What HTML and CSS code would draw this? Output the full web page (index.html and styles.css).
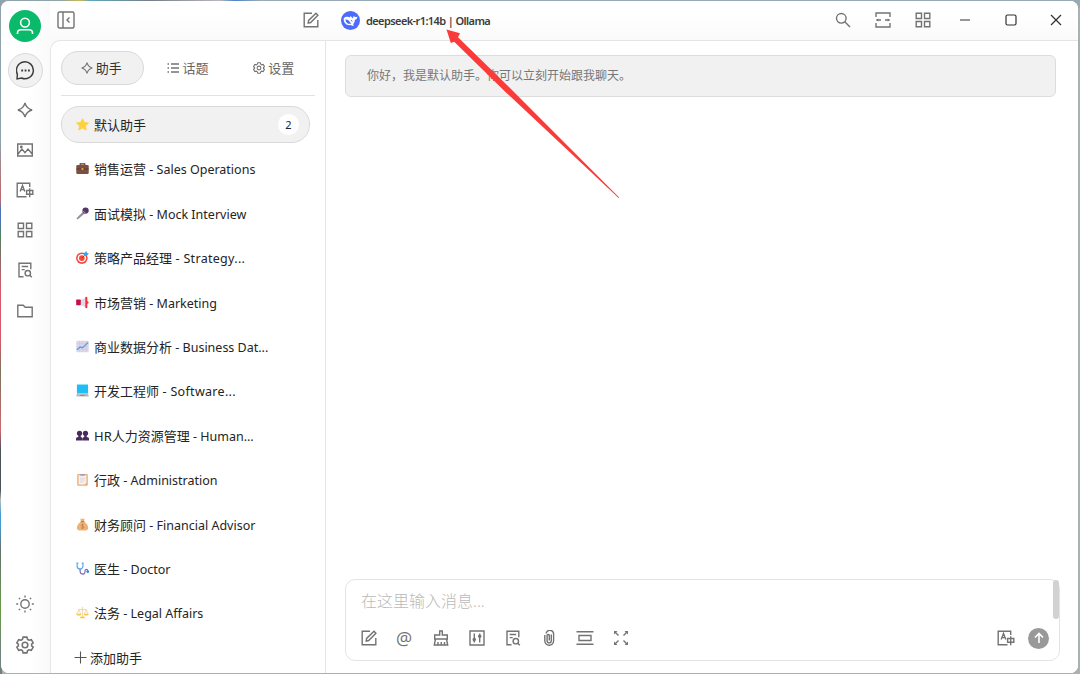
FILE: index.html
```html
<!DOCTYPE html>
<html lang="zh-CN">
<head>
    <meta charset="UTF-8">
    <meta name="viewport" content="width=device-width, initial-scale=1.0">
    <title>默认助手</title>
    <link rel="stylesheet" href="styles.css">
</head>
<body>
    <svg class="sprites">
        <symbol id="i-edit" viewBox="0 0 16 16"><path d="M9 1.2H1.2v13.6h13.6V8"/><path d="M5.2 11l.4-2.6L13 1.3l1.9 1.9-7.2 7.3z"/></symbol>
        <symbol id="i-grid" viewBox="0 0 16 16"><path d="M1.2 1.2h5.3v5.3H1.2zM9.5 1.2h5.3v5.3H9.5zM1.2 9.5h5.3v5.3H1.2zM9.5 9.5h5.3v5.3H9.5z"/></symbol>
        <symbol id="i-sparkle" viewBox="0 0 16 16"><path d="M8 .9C8.900 4.500 11.500 7.100 15.100 8 11.500 8.900 8.900 11.500 8 15.100 7.100 11.500 4.500 8.900.900 8 4.500 7.100 7.100 4.500 8 .9z"/></symbol>
        <symbol id="i-translate" viewBox="0 0 18 16"><path d="M13.7 5V1.2H1.2v13.6h9.3M4.2 9.5l2.3-6 2.3 6M5 7.6h3M10.6 8.5h6.2v3.8h-6.2zM13.7 6.3v9"/></symbol>
        <symbol id="i-doc" viewBox="0 0 16 16"><path d="M6.5 14.8H2V1.2h11.8v6M4.7 4.5h6.4M4.7 7.6h3"/><circle cx="10.8" cy="11.2" r="2.7"/><path d="M12.8 13.2l2 2"/></symbol>
        <symbol id="i-gear" viewBox="0 0 16 16"><path d="M6.3 1h3.4l.6 2 1.3.8 2-.5 1.7 2.9-1.4 1.100v1.400l1.400 1.100-1.700 2.900-2-.5-1.300.8-.6 2H6.300l-.6-2-1.300-.8-2 .5L.700 9.800l1.400-1.100V7.300L.700 6.200l1.700-2.900 2 .5 1.300-.8z"/><circle cx="8" cy="8" r="2.500"/></symbol>
    </svg>

    <div class="window">
        <nav class="sidebar">
            <div class="avatar">
                <svg viewBox="0 0 18 18" class="icon"><circle cx="9" cy="5.600" r="4.400"/><path d="M1.500 17v-1c0-2.200 1.600-3.200 3.500-3.200h8c1.900 0 3.500 1 3.500 3.200v1"/></svg>
            </div>
            <div class="menu">
                <div class="menu-item active">
                    <svg viewBox="0 0 18 18" class="icon"><path d="M1 17l.3-4.600A8 8 0 1 1 5.200 16.100z"/><path d="M5 9h1.700M8.200 9h1.700M11.400 9h1.700" class="bold"/></svg>
                </div>
                <div class="menu-item"><svg class="icon"><use href="#i-sparkle"/></svg></div>
                <div class="menu-item">
                    <svg viewBox="0 0 16 16" class="icon"><path d="M.7 2h14.600v12H.7zM1 12l4-5 3 3.600L11 7l4.200 5"/><circle cx="4.300" cy="5" r=".7"/></svg>
                </div>
                <div class="menu-item"><svg class="icon wide"><use href="#i-translate"/></svg></div>
                <div class="menu-item"><svg class="icon"><use href="#i-grid"/></svg></div>
                <div class="menu-item"><svg class="icon"><use href="#i-doc"/></svg></div>
                <div class="menu-item">
                    <svg viewBox="0 0 16 16" class="icon"><path d="M.8 2.300h5.400l2 2h7v9.500H.8z"/></svg>
                </div>
            </div>
            <div class="menu menu-bottom">
                <div class="menu-item">
                    <svg viewBox="0 0 18 18" class="icon sun"><circle cx="9" cy="9" r="4.200"/><path d="M9 .4v2M9 15.600v2M.2 9h2M15.800 9h2M2.900 2.900l1.200 1.200M13.900 13.900l1.200 1.200M2.900 15.100l1.200-1.200M13.900 4.100l1.200-1.200"/></svg>
                </div>
                <div class="menu-item"><svg class="icon sun"><use href="#i-gear"/></svg></div>
            </div>
        </nav>

        <div class="main">
            <header class="navbar">
                <div class="navbar-left">
                    <svg viewBox="0 0 18 18" class="icon wide"><rect x="1" y="1" width="16" height="16" rx="1.500"/><path d="M6 1v16M12.500 6.500L10 9l2.500 2.500"/></svg>
                    <svg class="icon"><use href="#i-edit"/></svg>
                </div>
                <div class="navbar-right">
                    <svg viewBox="0 0 18 18" class="logo"><circle cx="9" cy="9" r="9" fill="#4d6bfe"/><path d="M2.600 6.800c1.700-1.600 4.300-1.700 6-.6-.1-.7.200-1.200.7-1.400.4 1 1.300 1.600 2 2.200.3-1 .2-1.800.8-2.600.4.900 1 1.300 1.700 1.300.7 0 1.200-.2 1.700-.6 0 1.800-.8 3-2.300 3.300-.1 2-.8 3.300-1.900 4.200l1.300.9c-1.200.6-2.500.4-3.400-.2-3.700.7-7.200-2-6.600-6.500z" fill="#fff"/><path d="M4.200 8.200c2-.3 3.400 1 4.200 2.300.5.700 1 1.100 1.500 1.300-2.700 1.200-5.400-.6-5.700-3.600zM9.300 8.500c.9 0 1.500.5 1.700 1.400-.9.100-1.600-.5-1.700-1.400z" fill="#4d6bfe"/></svg>
                    <span class="model">deepseek-r1:14b | Ollama</span>
                    <div class="tools">
                        <svg viewBox="0 0 16 16" class="icon"><circle cx="6.300" cy="6.300" r="4.800"/><path d="M9.800 9.800l5.200 5.200"/></svg>
                        <svg viewBox="0 0 16 16" class="icon"><path d="M1 5V1h14v4M1 11v4h14v-4M1.500 8H6M10 8h4.500"/><path d="M1 8l2.300-1.500v3zM15 8l-2.300-1.500v3z" class="fill"/></svg>
                        <svg class="icon"><use href="#i-grid"/></svg>
                    </div>
                    <div class="controls">
                        <svg viewBox="0 0 12 12"><path d="M1 6h10"/></svg>
                        <svg viewBox="0 0 12 12"><rect x="1" y="1" width="10" height="10" rx="1.500"/></svg>
                        <svg viewBox="0 0 12 12"><path d="M1 1l10 10M11 1L1 11"/></svg>
                    </div>
                </div>
            </header>

            <div class="content">
                <section class="assistants">
                    <div class="tabs">
                        <div class="tab active"><svg class="icon"><use href="#i-sparkle"/></svg>助手</div>
                        <div class="tab"><svg viewBox="0 0 12 12" class="icon"><path d="M4 2h8M4 6h8M4 10h8M.5 2H2M.5 6H2M.5 10H2"/></svg>话题</div>
                        <div class="tab"><svg class="icon"><use href="#i-gear"/></svg>设置</div>
                    </div>
                    <div class="list">
                        <div class="item active">
                            <svg viewBox="0 0 14 14"><path d="M7 .8l2 4 4.400.6-3.200 3.100.8 4.500L7 10.900 3 13l.8-4.500L.6 5.400 5 4.800z" fill="#fdd33c" stroke="#fdd33c" stroke-linejoin="round"/></svg>
                            <span>默认助手</span><span class="count">2</span>
                        </div>
                        <div class="item">
                            <svg viewBox="0 0 14 14"><path d="M4.500 4V2h5v2" fill="none" stroke="#50342d" stroke-width="1.200"/><rect x=".3" y="3.300" width="13.400" height="9.500" rx="1.300" fill="#7b5040"/><path d="M.5 7.500h13" stroke="#5b3a31"/><rect x="6" y="6.500" width="2" height="2" fill="#f5a33b"/></svg>
                            <span>销售运营<span class="en"> - Sales Operations</span></span>
                        </div>
                        <div class="item">
                            <svg viewBox="0 0 14 14"><path d="M.5 12.200L8 4.500 10 6.500 1.800 13.500z" fill="#998e9d"/><circle cx="10.300" cy="3.900" r="3.400" fill="#533566"/><path d="M7.500 4l3 3" stroke="#b6a7be"/></svg>
                            <span>面试模拟<span class="en"> - Mock Interview</span></span>
                        </div>
                        <div class="item">
                            <svg viewBox="0 0 14 14"><circle cx="6.300" cy="7.700" r="6.200" fill="#f04a40"/><circle cx="6.300" cy="7.700" r="4.500" fill="#fff"/><circle cx="6.300" cy="7.700" r="3" fill="#f04a40"/><path d="M6.300 7.700L11 3" stroke="#245d91"/><path d="M8.500 5.500V2.500L11.300.1l.5 2.100 2.100.5L11.500 5.500z" fill="#37a6ed"/></svg>
                            <span>策略产品经理<span class="en cut"> - Strategy...</span></span>
                        </div>
                        <div class="item">
                            <svg viewBox="0 0 14 14"><rect x=".2" y="3.700" width="5" height="6.200" rx=".8" fill="#ca0b4a"/><path d="M5.500 4l4.800-2v10l-4.800-2z" fill="#ded9e4"/><rect x="10" y=".8" width="2.200" height="12.400" rx="1" fill="#f52c36"/><path d="M12 5.500c2 .2 2 3 0 3" fill="#f52c36"/></svg>
                            <span>市场营销<span class="en"> - Marketing</span></span>
                        </div>
                        <div class="item">
                            <svg viewBox="0 0 14 14"><rect x=".3" y=".8" width="13.400" height="12.400" rx="1" fill="#ded7eb"/><path d="M.5 4h13M.5 7h13M.5 10h13M4 1v12M7.500 1v12M11 1v12" stroke="#c9c0da" stroke-width=".5"/><path d="M1 10.500l3.500-3 2.500 1L13 2.500" fill="none" stroke="#48a0e0" stroke-width="1.300"/></svg>
                            <span>商业数据分析<span class="en"> - Business Dat...</span></span>
                        </div>
                        <div class="item">
                            <svg viewBox="0 0 14 14"><rect x="1" y=".5" width="12" height="9.500" rx=".7" fill="#21bdf5"/><path d="M1 10h12l.7 3.500H.3z" fill="#b9b8bd"/><path d="M4.500 12.300h5" stroke="#88888f"/></svg>
                            <span>开发工程师<span class="en cut"> - Software...</span></span>
                        </div>
                        <div class="item">
                            <svg viewBox="0 0 14 14" fill="#472b5d"><circle cx="3.800" cy="4.600" r="2.800"/><circle cx="10.200" cy="4.600" r="2.800"/><path d="M2.500 6h2.600v2.500c1.100.2 1.800.8 1.800 2v2H0v-2c0-1.200.9-1.800 2.500-2zM8.900 6h2.600v2.500c1.600.2 2.500.8 2.500 2v2H7.100v-2c0-1.200.6-1.800 1.800-2z"/></svg>
                            <span>HR人力资源管理<span class="en"> - Human...</span></span>
                        </div>
                        <div class="item">
                            <svg viewBox="0 0 14 14"><rect x="1.300" y="1" width="11.400" height="12.700" rx="1" fill="#efae71"/><path d="M2.800 2.500h8.400v8L9.500 12.300H2.800z" fill="#f6f2f4"/><path d="M4.500 1h5v2h-5z" fill="#a7a0b2"/><path d="M4.300 5.500h5.500M4.300 7.500h5.500M4.300 9.500h4" stroke="#cdc6d1" stroke-width=".7"/></svg>
                            <span>行政<span class="en"> - Administration</span></span>
                        </div>
                        <div class="item">
                            <svg viewBox="0 0 14 14"><path d="M4.700.7h4.600L8.600 4c3 1.500 4.500 4 4.500 6.500 0 2-1 3-3 3H4c-2 0-3-1-3-3C1 8 2.500 5.500 5.400 4z" fill="#efb274"/><path d="M5 4h4" stroke="#b0713f"/><path d="M8.500 7.500c-1-.8-3-.4-2.800.7.2 1.200 3 .5 3 1.900 0 1.100-2 1.300-3.200.4M7 6.300v5.600" fill="none" stroke="#b97d49" stroke-width=".7"/></svg>
                            <span>财务顾问<span class="en"> - Financial Advisor</span></span>
                        </div>
                        <div class="item">
                            <svg viewBox="0 0 14 14" fill="none" stroke-width="1.300"><path d="M2.500 1.200H1.200v3c0 4.400 6.300 4.400 6.300 0v-3H6.200" stroke="#52aaf0"/><path d="M4.400 7.500v2.300c0 4.300 5.300 4.300 5.300.3V9.500c0-2 3-2 3 0" stroke="#8570b0"/><circle cx="12.600" cy="10.300" r=".8" stroke="#2686df"/></svg>
                            <span>医生<span class="en"> - Doctor</span></span>
                        </div>
                        <div class="item">
                            <svg viewBox="0 0 14 14"><path d="M7 1v10M2.500 3.700h9M3 4L1 8.500M3 4l2 4.500M11 4L9 8.500M11 4l2 4.500" fill="none" stroke="#e9cd8d" stroke-width=".8"/><path d="M.2 8.300h5.600C5.500 11 .5 11 .2 8.300zM8.200 8.300h5.600c-.3 2.700-5.300 2.700-5.600 0zM4 13.300c.2-3 5.800-3 6 0z" fill="#fac546"/></svg>
                            <span>法务<span class="en"> - Legal Affairs</span></span>
                        </div>
                        <div class="item add">
                            <svg viewBox="0 0 12 12"><path d="M6 .5v11M.5 6h11" stroke="#555"/></svg>
                            <span>添加助手</span>
                        </div>
                    </div>
                </section>

                <section class="chat">
                    <div class="prompt">你好，我是默认助手。你可以立刻开始跟我聊天。</div>
                    <div class="inputbar">
                        <div class="placeholder">在这里输入消息...</div>
                        <div class="scrollbar"></div>
                        <div class="toolbar">
                            <svg class="icon"><use href="#i-edit"/></svg>
                            <span class="at">@</span>
                            <svg viewBox="0 0 16 16" class="icon"><path d="M6.700 5V1h2.600v4h5v4H1.700V5zM2.500 9L1.300 15h13.400L13.500 9M5 15v-3M8.300 15v-3M11.500 15v-3"/></svg>
                            <svg viewBox="0 0 16 16" class="icon"><path d="M1 1h14v14H1zM5.300 3.500v9M10.700 3.500v9"/><circle cx="5.300" cy="9.500" r="1.100"/><circle cx="10.700" cy="6.300" r="1.100"/></svg>
                            <svg class="icon"><use href="#i-doc"/></svg>
                            <svg viewBox="0 0 16 16" class="icon"><path d="M10.300 4.500v6.300a2.100 2.100 0 0 1-4.200 0V5a1.400 1.400 0 0 1 2.200 0v5.500M3.800 5v5.800a4.400 4.400 0 0 0 8.800 0V4.500a3.700 3.700 0 0 0-7.500-1"/></svg>
                            <svg viewBox="0 0 18 16" class="icon wide"><path d="M.5 1.700h17M.5 14.300h17M3 5.500h12v5H3z"/></svg>
                            <svg viewBox="0 0 16 16" class="icon"><path d="M1.500 1.500l4 4M14.500 1.500l-4 4M1.500 14.500l4-4M14.500 14.500l-4-4"/><path d="M1 1h3.500L1 4.500zM15 1v3.500L11.500 1zM1 15v-3.500L4.500 15zM15 15h-3.500l3.500-3.500z" class="fill"/></svg>
                            <div class="toolbar-right">
                                <svg class="icon wide"><use href="#i-translate"/></svg>
                                <div class="send"><svg viewBox="0 0 12 12"><path d="M6 11V1.500M2 5.500l4-4 4 4"/></svg></div>
                            </div>
                        </div>
                    </div>
                </section>
            </div>
        </div>
    </div>

    <svg class="arrow" viewBox="0 0 174 170"><path d="M.5.500L14 4.200 12 8.200 64.500 59.500 173.200 168.500 172.600 169 60 63.500 8.200 12.700 4.800 14z" fill="#fb3b3a"/></svg>
</body>
</html>
```
FILE: styles.css
```css
* {
    box-sizing: border-box;
}
body {
    margin: 0;
    height: 674px;
    padding: 1px 2px 1px 1px;
    overflow: hidden;
    font-family: "Noto Sans", "Noto Sans CJK SC", sans-serif;
    font-size: 13px;
    color: #242424;
    background:
        linear-gradient(#8fa3ab 0 140px, #b76c70 190px 200px, #4872b9 210px 220px, #4f8460 235px, #806e68 255px, #d6596b 290px 340px, #7b7458 370px, #cc6970 430px, #4b5356 450px 490px, #b9bdc0 500px, #429bd3 515px 525px, #667170 550px, #659c46 610px, #71817b 650px) left / 2px 100% no-repeat,
        linear-gradient(90deg, #8fa3ab, #8fa3ab 60px, #cbb953 80px, #5da8b8 90px, #777e89 150px, #b8b8bd 220px, #4e82c9 235px, #9aabb4 260px, #98abb4) top / 100% 8px no-repeat,
        #a9b2b1;
}
.sprites {
    display: none;
}
.window {
    display: flex;
    height: 672px;
    border-radius: 8px;
    background: #fff;
    overflow: hidden;
}
.icon {
    width: 16px;
    height: 16px;
    flex: none;
    fill: none;
    stroke: #737373;
    stroke-width: 1.400;
}
.icon.wide {
    width: 18px;
}
.icon .fill {
    fill: #737373;
    stroke: none;
}

/* 左侧菜单 */
.sidebar {
    width: 49px;
    display: flex;
    flex-direction: column;
    align-items: center;
    padding: 9px 1px 11px 0;
    background: linear-gradient(90deg, #fff 55%, #fafafa);
}
.avatar {
    width: 32px;
    height: 32px;
    border-radius: 50%;
    background: #0bb96b;
    display: flex;
    align-items: center;
    justify-content: center;
}
.avatar .icon {
    width: 18px;
    height: 18px;
    stroke: #fff;
    stroke-width: 1.600;
}
.menu {
    margin-top: 10.500px;
    display: flex;
    flex-direction: column;
    gap: 5.100px;
}
.menu-bottom {
    margin-top: auto;
}
.menu-item {
    width: 35px;
    height: 35px;
    border-radius: 50%;
    display: flex;
    align-items: center;
    justify-content: center;
}
.menu-item.active {
    background: #f1f1f1;
    border: 1px solid #d9d9d9;
}
.menu-item.active .icon {
    width: 19px;
    height: 19px;
    stroke: #3d3d3d;
}
.icon .bold {
    stroke-width: 1.700;
}
.icon.sun {
    width: 18px;
    height: 18px;
}

/* 顶部栏 */
.main {
    flex: 1;
    display: flex;
    flex-direction: column;
    background: #fafafa;
}
.navbar {
    height: 39px;
    display: flex;
    align-items: center;
    padding-bottom: 1px;
    background: linear-gradient(#fff 30%, #fafafa);
}
.navbar-left {
    width: 276px;
    padding: 0 7px 0 7px;
    display: flex;
    justify-content: space-between;
    align-items: center;
}
.navbar-left .wide {
    height: 18px;
}
.navbar-right {
    flex: 1;
    display: flex;
    align-items: center;
    padding-left: 15px;
}
.logo {
    width: 19px;
    height: 19px;
}
.model {
    margin-left: 6px;
    font-size: 11px;
    font-weight: 600;
    color: #3c3c3c;
    letter-spacing: -0.600px;
}
.tools {
    margin-left: auto;
    display: flex;
    gap: 24px;
}
.controls {
    margin: 0 16px 0 28px;
    display: flex;
    gap: 33.500px;
}
.controls svg {
    width: 12px;
    height: 12px;
    fill: none;
    stroke: #303030;
    stroke-width: 1.200;
}
.content {
    flex: 1;
    display: flex;
    min-height: 0;
    background: #fff;
    border: solid #e5e5e5;
    border-width: 1px 0 0 1px;
    border-top-left-radius: 10px;
}

/* 助手列表 */
.assistants {
    width: 275px;
    border-right: 1px solid #e5e5e5;
    padding: 10px 10px 0;
}
.tabs {
    display: flex;
    gap: 3px;
    height: 45px;
    border-bottom: 1px solid #e2e2e2;
}
.tab {
    width: 83px;
    height: 34px;
    padding-bottom: 1px;
    border-radius: 17px;
    display: flex;
    align-items: center;
    justify-content: center;
    gap: 3px;
    color: #666;
}
.tab .icon {
    width: 12px;
    height: 12px;
}
.tab.active {
    padding-right: 2px;
    background: #f1f1f1;
    border: 1px solid #d9d9d9;
    color: #333;
}
.list {
    padding-top: 10px;
    display: flex;
    flex-direction: column;
    gap: 7.400px;
}
.item {
    width: 249px;
    height: 37px;
    flex: none;
    padding: 0 10px 0 14px;
    border: 1px solid transparent;
    border-radius: 18px;
    display: flex;
    align-items: center;
    gap: 5px;
    white-space: nowrap;
}
.item svg {
    width: 13px;
    height: 13px;
    flex: none;
}
.item.active {
    background: #f1f1f1;
    border-color: #d9d9d9;
}
.item.add {
    padding-left: 12px;
    gap: 3px;
}
.en {
    font-size: 12.500px;
    white-space: pre;
}
.en.cut {
    letter-spacing: 0.300px;
}
.count {
    width: 21px;
    height: 21px;
    margin-left: auto;
    border-radius: 50%;
    background: #fff;
    font-size: 11px;
    line-height: 21px;
    text-align: center;
}

/* 聊天区域 */
.chat {
    flex: 1;
    display: flex;
    flex-direction: column;
    justify-content: space-between;
    padding: 14px 18px 12px 19px;
}
.prompt {
    height: 42px;
    margin-right: 4px;
    padding-left: 21px;
    line-height: 40px;
    font-size: 12px;
    color: #777;
    background: #f1f1f1;
    border: 1px solid #dcdcdc;
    border-radius: 6px;
}
.inputbar {
    position: relative;
    height: 82px;
    padding: 10px 10px 0 15px;
    border: 1px solid #e3e3e3;
    border-radius: 10px;
}
.placeholder {
    font-size: 16px;
    font-weight: 300;
    line-height: 22px;
    color: #bababa;
}
.scrollbar {
    position: absolute;
    top: 0;
    right: 0;
    width: 6px;
    height: 39px;
    border-radius: 3px;
    background: #d2d2d2;
}
.toolbar {
    margin-top: 15px;
    display: flex;
    align-items: center;
    height: 22px;
    gap: 20px;
}
.toolbar .wide {
    margin: 0 -1px;
}
.at {
    width: 16px;
    font-family: "Open Sans", sans-serif;
    font-size: 18px;
    line-height: 20px;
    text-indent: -1px;
    color: #737373;
}
.toolbar-right {
    margin-left: auto;
    display: flex;
    align-items: center;
    gap: 14px;
}
.send {
    width: 21px;
    height: 21px;
    border-radius: 50%;
    background: #999;
    display: flex;
    align-items: center;
    justify-content: center;
}
.send svg {
    width: 12px;
    height: 12px;
    fill: none;
    stroke: #fff;
    stroke-width: 1.600;
}

.arrow {
    position: absolute;
    left: 446px;
    top: 29px;
    width: 174px;
    height: 170px;
}
```
